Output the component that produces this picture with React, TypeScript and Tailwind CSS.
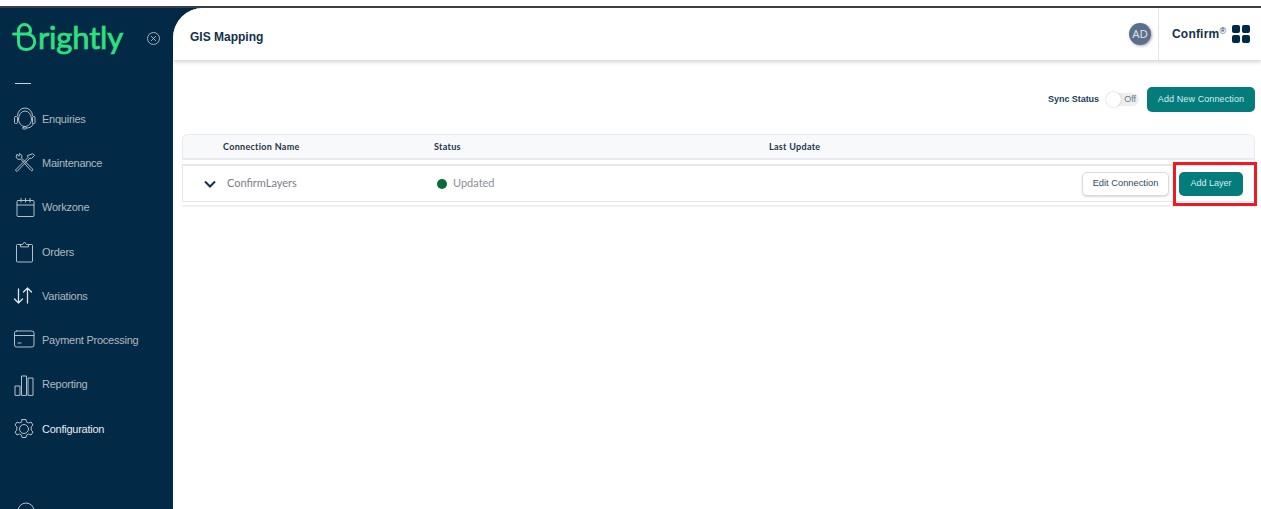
import type { ReactNode } from 'react';

const sans = 'font-["Liberation_Sans",Arial,sans-serif]';
const round = 'font-["Lato","Noto_Sans",sans-serif]';

function Icon({ children, w = 24, h = 24 }: { children: ReactNode; w?: number; h?: number }) {
    return (
        <svg width={w} height={h} viewBox={`0 0 ${w} ${h}`} fill="none" stroke="#b4bfc8" strokeWidth="1" strokeLinecap="round" strokeLinejoin="round">
            {children}
        </svg>
    );
}

const navItems: { label: string; active?: boolean; icon: ReactNode }[] = [
    {
        label: 'Enquiries',
        icon: (
            <Icon>
                <path d="M6.500 12a6.500 8 0 1 1 13 0c0 4-2.800 7.500-6.500 7.500S6.500 16 6.500 12z" />
                <path d="M5.500 8.500a7.500 7.500 0 0 1 15 0" />
                <rect x="2.500" y="9.500" width="3" height="7" rx="1" />
                <rect x="20.500" y="9.500" width="2.500" height="7" rx="1" />
                <path d="M21 16.500c0 3-3 4.500-6.500 4.500" />
                <rect x="10.500" y="20" width="4" height="2" rx="1" />
            </Icon>
        ),
    },
    {
        label: 'Maintenance',
        icon: (
            <Icon>
                <path d="M5 3.500 4 6l2 2.500 2.500-.5L19 19.500c1 1 2.500-.5 1.500-1.500L9.500 7l.500-2.500L7.500 2.500l-.5 2.500z" />
                <path d="M21 3l1.500 1.500-3 3-1.500-.5L5.500 20c-1 1-2.500-.5-1.500-1.500L16 6.500l-.5-1.500z" />
            </Icon>
        ),
    },
    {
        label: 'Workzone',
        icon: (
            <Icon>
                <rect x="5" y="4.500" width="17" height="16" rx="1" />
                <path d="M5 9h17M9 2.500v3.500M13.500 2.500v3.500M18 2.500v3.500" />
            </Icon>
        ),
    },
    {
        label: 'Orders',
        icon: (
            <Icon>
                <path d="M8.500 4.500H5.500a1 1 0 0 0-1 1V21a1 1 0 0 0 1 1h14a1 1 0 0 0 1-1V5.500a1 1 0 0 0-1-1h-3" />
                <path d="M8.500 6.500V4.500h2l2-2.500 2 2.500h2v2z" />
            </Icon>
        ),
    },
    {
        label: 'Variations',
        icon: (
            <Icon>
                <path stroke="#dfe4e8" strokeWidth="1.300" d="M6.500 5v14M2.500 15l4 4 4-4M15.500 19V4M11.500 8l4-4 4 4" />
            </Icon>
        ),
    },
    {
        label: 'Payment Processing',
        icon: (
            <Icon>
                <rect x="2.500" y="3" width="19.500" height="16" rx="2" />
                <path d="M2.500 7.500h19.500M6 15h3" />
            </Icon>
        ),
    },
    {
        label: 'Reporting',
        icon: (
            <Icon>
                <path d="M3 22v-9h5v9zM9.500 22V3h5v19zM16 22V5h5v17z" />
            </Icon>
        ),
    },
    {
        label: 'Configuration',
        active: true,
        icon: (
            <Icon>
                <circle cx="12" cy="12" r="4.500" />
                <path d="M10 2.500h4l.5 2.500 2.200 1 2.300-1 2 3-1.800 1.800v3.400l1.800 1.800-2 3-2.300-1-2.200 1-.5 2.500h-4l-.5-2.500-2.200-1-2.300 1-2-3 1.800-1.800v-3.400L3 8l2-3 2.300 1 2.200-1z" />
            </Icon>
        ),
    },
];

function Sidebar() {
    return (
        <aside className={`flex w-[173px] shrink-0 flex-col overflow-hidden bg-[#022a47] ${sans}`}>
            <div className="flex h-[60px] shrink-0 items-center pl-[12px]">
                <svg width="25" height="29" viewBox="0 0 25 29" fill="none" stroke="#2fe07f" strokeWidth="3" strokeLinecap="round" className="mt-[-2px] shrink-0">
                    <path d="M1.500 11H15a7.500 7.500 0 0 1 0 15.500c-5 0-8.500-2-8.500-7V7.500a6 6 0 0 1 12 0c0 2-1.500 3.500-4 3.500" />
                </svg>
                <span className={`ml-[1px] mt-[-2px] text-[31px] leading-none tracking-[-.2px] text-[#2fe07f] [-webkit-text-stroke:0.7px_#2fe07f] ${round}`}>rightly</span>
                <svg width="13" height="13" viewBox="0 0 13 13" fill="none" stroke="#b4bfc8" strokeWidth=".9" className="ml-[24px]">
                    <circle cx="6.500" cy="6.500" r="6" />
                    <path d="M4 4l5 5M9 4l-5 5" />
                </svg>
            </div>
            <div className="ml-[15px] mt-[15px] h-px w-[16px] shrink-0 bg-[#c9d2d9]" />
            <nav className="mt-[13px] flex flex-col">
                {navItems.map((item) => (
                    <div key={item.label} className="flex h-[44.25px] shrink-0 items-center pl-[12px]">
                        <span className="flex w-[30px] justify-start">{item.icon}</span>
                        <span className={`text-[11px] tracking-[-.25px] ${item.active ? 'text-[#e6ebee]' : 'text-[#b0b8bf]'}`}>{item.label}</span>
                    </div>
                ))}
            </nav>
            <svg width="20" height="20" viewBox="0 0 20 20" fill="none" stroke="#b4bfc8" className="ml-[16px] mt-[50px] shrink-0">
                <circle cx="10" cy="10" r="8" />
            </svg>
        </aside>
    );
}

function Header() {
    return (
        <header className="flex h-[52px] shrink-0 items-stretch justify-between rounded-tl-[30px] bg-white pl-[17px] shadow-[0_2px_4px_rgba(0,0,0,.18)]">
            <h1 className={`mt-[5px] self-center text-[12px] font-bold text-[#12304a] ${sans}`}>GIS Mapping</h1>
            <div className="flex items-stretch">
                <div className="mr-[7px] flex h-[22px] w-[22px] items-center justify-center self-center rounded-full bg-[#5a6f8c] text-[11.500px] text-[#dbe1e8] shadow-[1px_1px_3px_rgba(0,0,0,.35)]">AD</div>
                <div className="flex w-[103px] items-center border-l border-[#e2e4e6] pl-[13px]">
                    <span className={`text-[12px] font-bold tracking-[.2px] text-[#12304a] ${sans}`}>
                        Confirm<sup className="text-[9px] font-normal">®</sup>
                    </span>
                    <div className="ml-[6px] grid grid-cols-2 gap-[2px]">
                        <span className="h-[8px] w-[8px] rounded-[2px] bg-[#022a47]" />
                        <span className="h-[8px] w-[8px] rounded-[2px] bg-[#022a47]" />
                        <span className="h-[8px] w-[8px] rounded-[2px] bg-[#022a47]" />
                        <span className="h-[8px] w-[8px] rounded-[2px] bg-[#022a47]" />
                    </div>
                </div>
            </div>
        </header>
    );
}

function Toolbar() {
    return (
        <div className={`flex items-center justify-end pr-[6px] pt-[27px] ${sans}`}>
            <span className="text-[9px] font-bold tracking-[-.05px] text-[#22405a]">Sync Status</span>
            <div className="relative ml-[7px] flex h-[13px] w-[33px] items-center justify-end rounded-full bg-[#eceef0] pr-[3px] text-[9px] text-[#6b7785]">
                Off
                <span className="absolute left-0 top-[-1px] h-[15px] w-[15px] rounded-full bg-white shadow-[0_0_2px_rgba(0,0,0,.25)]" />
            </div>
            <button className="ml-[8px] h-[25px] w-[108px] rounded-[5px] bg-[#047c7b] text-[9px] tracking-[.1px] text-[#d8eeee]">Add New Connection</button>
        </div>
    );
}

function ConnectionTable() {
    return (
        <section className="ml-[9px] mr-[6px] mt-[22px]">
            <div className={`flex h-[26px] items-center rounded-t-[6px] border border-b-2 border-[#e8ebf0] bg-[#f8f9fb] text-[9px] font-bold tracking-[.3px] text-[#1f3346] ${round}`}>
                <span className="ml-[40px] w-[211px]">Connection Name</span>
                <span className="w-[335px]">Status</span>
                <span>Last Update</span>
            </div>
            <div className="mt-[4px] border-b-2 border-[#f0f1f3] pb-[3px]">
                <div className="flex h-[38px] items-center border border-t-2 border-[#e6e7e9] bg-white">
                    <svg width="12" height="8" viewBox="0 0 12 8" fill="none" stroke="#12304a" strokeWidth="2" className="ml-[21px] shrink-0">
                        <path d="M1 1.500l5 5 5-5" />
                    </svg>
                    <span className={`ml-[11px] w-[210px] text-[11px] text-[#7b8088] ${round}`}>ConfirmLayers</span>
                    <span className="h-[10px] w-[10px] rounded-full bg-[#0b6b3a]" />
                    <span className={`ml-[6px] text-[11px] text-[#8a8f96] ${round}`}>Updated</span>
                    <div className={`ml-auto flex items-center ${sans}`}>
                        <button className="h-[24px] w-[87px] rounded-[5px] border border-[#d9dbde] bg-white text-[9.300px] text-[#2f4a63] shadow-[0_1px_2px_rgba(0,0,0,.15)]">Edit Connection</button>
                        <div className="relative ml-[10px] mr-[11px]">
                            <button className="block h-[24px] w-[64px] rounded-[5px] bg-[#047c7b] text-[9px] text-[#d8eeee]">Add Layer</button>
                            <span className="absolute left-[-6px] right-[-14px] top-[-10px] h-[44px] border-[3px] border-[#ed1c24]" />
                        </div>
                    </div>
                </div>
            </div>
        </section>
    );
}

export default function App() {
    return (
        <div className="flex h-[509px] w-full flex-col overflow-hidden bg-white">
            <div className="h-[6px] shrink-0 bg-white" />
            <div className="h-[2px] shrink-0 bg-[#3d4043]" />
            <div className="flex min-h-0 flex-1">
                <Sidebar />
                <div className="min-w-0 flex-1 bg-[#022a47]">
                    <div className="h-full rounded-tl-[30px] bg-white">
                        <Header />
                        <Toolbar />
                        <ConnectionTable />
                    </div>
                </div>
            </div>
        </div>
    );
}
